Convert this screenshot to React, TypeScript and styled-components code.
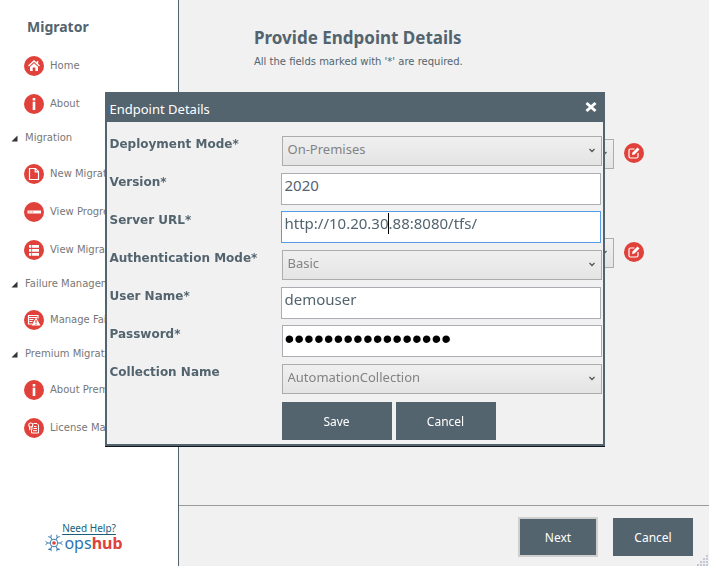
import React from "react";
import styled, { createGlobalStyle, css } from "styled-components";

const slate = "#53646f";
const red = "#e0413a";
const ui = `"Noto Sans", "Open Sans", sans-serif`;
const wide = `"DejaVu Sans", Verdana, sans-serif`;

const GlobalStyle = createGlobalStyle`
  * { box-sizing: border-box; }
  body { margin: 0; background: #f1f1f1; color: ${slate}; font-family: ${ui}; }
  button, input, select { font-family: inherit; margin: 0; }
`;

const Shell = styled.div`
  display: flex;
  min-height: 100vh;
`;

const Sidebar = styled.aside`
  display: flex;
  flex-direction: column;
  flex: 0 0 179px;
  background: #fff;
  border-right: 1px solid ${slate};
  overflow: hidden;
`;

const Brand = styled.h1`
  margin: 0;
  padding: 16px 0 0 27px;
  height: 47px;
  font: bold 14px/22px ${ui};
`;

const NavGroup = styled.section`
  display: flex;
  flex-direction: column;
`;

const NavHeading = styled.h2`
  display: flex;
  align-items: center;
  gap: 7px;
  height: 32px;
  margin: 0;
  padding: 0 0 2px 11px;
  font: normal 10px/14px ${wide};
  color: #777;
  white-space: nowrap;
`;

const NavLink = styled.a`
  display: flex;
  align-items: center;
  gap: 6px;
  height: 38px;
  padding-left: 24px;
  font: 10px/14px ${wide};
  color: #777;
  text-decoration: none;
  white-space: nowrap;
`;

const Help = styled.footer`
  display: flex;
  flex-direction: column;
  align-items: center;
  margin-top: auto;
  padding: 0 10px 14px 0;
`;

const HelpLink = styled.a`
  margin-left: 10px;
  font: 10px/12px ${ui};
  color: #17607a;
  text-underline-offset: 2px;
`;

const Logo = styled.div`
  display: flex;
  align-items: center;
  gap: 1px;
  font: 16px/18px ${ui};
  color: #2b74b0;
  b { color: ${red}; }
`;

const Main = styled.main`
  display: flex;
  flex-direction: column;
  flex: 1;
  min-width: 0;
`;

const Content = styled.div`
  flex: 1;
  padding: 26px 65px 0 75px;
`;

const Title = styled.h2`
  margin: 0;
  font: bold 17px/24px ${ui};
`;

const Hint = styled.p`
  margin: 5px 0 0;
  font: 10px/14px ${wide};
`;

const Endpoints = styled.div`
  display: grid;
  gap: 67px;
  margin-top: 68px;
`;

const EndpointRow = styled.div`
  display: flex;
  align-items: center;
  gap: 10px;
`;

const IconButton = styled.button`
  display: flex;
  padding: 0;
  border: 0;
  background: none;
`;

const Actions = styled.footer`
  display: flex;
  justify-content: flex-end;
  align-items: center;
  gap: 15px;
  height: 61px;
  padding: 2px 16px 0 0;
  border-top: 1px solid #999c9c;
  position: relative;
`;

const Button = styled.button<{ $width?: number; $ring?: boolean }>`
  width: ${(p) => p.$width ?? 80}px;
  height: ${(p) => (p.$ring ? 40 : 38)}px;
  padding: 2px 0 0;
  border: ${(p) => (p.$ring ? "2px solid #cfcfcf" : "0")};
  background: ${slate};
  color: #fff;
  font: 12px/16px ${ui};
`;

const Grip = styled.svg`
  position: absolute;
  right: 0;
  bottom: 0;
`;

const Overlay = styled.div`
  position: fixed;
  inset: 0;
  display: flex;
  justify-content: center;
  align-items: flex-start;
  padding-top: 92px;
`;

const Dialog = styled.div`
  width: min(500px, 100%);
  border: 2px solid ${slate};
  border-top: 0;
  background: #f1f1f1;
  box-shadow: 0 1px 0 #111820;
`;

const DialogHeader = styled.header`
  display: flex;
  align-items: center;
  justify-content: space-between;
  height: 30px;
  padding: 4px 6px 0 3px;
  background: ${slate};
  color: #fff;
`;

const DialogTitle = styled.h2`
  margin: 0;
  font: 13px/20px ${ui};
`;

const CloseButton = styled(IconButton)`
  padding-bottom: 4px;
`;

const Form = styled.form`
  padding: 12px 1px 4px 3px;
`;

const Row = styled.div`
  display: grid;
  grid-template-columns: 171px 1fr;
  align-items: start;
  min-height: 38px;
`;

const Label = styled.label`
  font: bold 12px/20px ${wide};
`;

const field = css`
  width: 100%;
  border: 1px solid #abadb3;
  border-radius: 0;
  outline: none;
`;

const InputWrap = styled.div<{ $secret?: boolean }>`
  position: relative;
  margin: ${(p) => (p.$secret ? "1px 0 0 1px" : "1px 1px 0 0")};
`;

const Input = styled.input<{ $active?: boolean }>`
  ${field}
  display: block;
  height: 32px;
  padding: 0 3px 9px;
  background: #fff;
  color: ${slate};
  font-size: 15px;
  ${(p) => p.$active && "border-color: #569de5;"}
  &[type="password"] {
    padding: 0 2px 4px;
    color: #000;
    font-family: "Liberation Sans", Arial, sans-serif;
    font-size: 28px;
  }
`;

const Caret = styled.span`
  position: absolute;
  left: 107px;
  top: 2px;
  width: 1px;
  height: 21px;
  background: #000;
`;

const SelectWrap = styled.div`
  position: relative;
  flex: 1;
  margin: 2px 0 0 1px;
  svg { position: absolute; right: 7px; top: 12px; pointer-events: none; }
`;

const Select = styled.select`
  ${field}
  display: block;
  appearance: none;
  height: 30px;
  padding: 0 20px 4px 5px;
  border-color: #acacac;
  background: linear-gradient(#f0f0f0, #e4e4e4);
  color: #838383;
  font-size: 13px;
`;

const DialogActions = styled.div`
  display: flex;
  gap: 4px;
  margin: 2px 0 0 172px;
`;

type IconName = "home" | "info" | "file" | "progress" | "list" | "failure" | "license" | "edit";

const glyphs: Record<IconName, React.ReactNode> = {
  home: (
    <>
      <path d="M4.5 10 10 5l5.500 5M13.500 5v3" fill="none" stroke="#fff" strokeWidth="1.4" />
      <path d="M6 10.800 10 7.300l4 3.500V15h-2.700v-3.500H8.700V15H6z" fill="#fff" />
    </>
  ),
  info: <path d="M8.700 4h2.600v2.400H8.700zM8.700 7.700h2.600V16H8.700z" fill="#fff" />,
  file: <path d="M5.500 4.500h6l3 3v8h-9zM11.200 4.500v3.300h3.300" fill="none" stroke="#fff" strokeWidth="1.2" />,
  progress: (
    <>
      <path d="M3.500 8.500h13.500v3H3.500z" fill="#fff" />
      <path d="M4.500 9.500h2v1h-2zM7.500 9.500h2v1h-2z" fill="#e88a85" />
    </>
  ),
  list: (
    <>
      <path d="M5 5h10v2.800H5zM5 9h10v2.800H5zM5 13h10v2.800H5z" fill="#fff" />
      <path d="M7.600 5v11" stroke={red} strokeWidth=".7" />
    </>
  ),
  failure: (
    <>
      <path d="M4 5.500h10v3M4 7.500h9M4.500 5.500v8.500h3.500M5.500 9.500h4M5.500 11.500h3" fill="none" stroke="#fff" strokeWidth="1.2" />
      <path d="m12 7.500 4.500 8H7.500z" fill="#fff" />
      <path d="M12 10v3m0 .8v1" stroke={red} strokeWidth="1.1" />
    </>
  ),
  license: (
    <>
      <path d="M9.500 5.500h3.500l1.500 1.500v8h-7v-3.500M10 8.500h2.500M9.500 10.500h3.500M9 12.700h4" fill="none" stroke="#fff" strokeWidth="1" />
      <circle cx="6.800" cy="7" r="2" fill="none" stroke="#fff" strokeWidth="1.1" />
      <path d="M5.500 8.800v3l1.300-1 1.200 1v-3" fill="none" stroke="#fff" strokeWidth=".9" />
    </>
  ),
  edit: (
    <>
      <path d="M10.500 6h-4Q5 6 5 7.500v6Q5 15 6.500 15h6q1.500 0 1.500-1.500V10" fill="none" stroke="#fff" strokeWidth="1.2" />
      <path d="m8 12 .5-2.500 5-5 2 2-5 5z" fill="#fff" />
    </>
  ),
};

const RoundIcon = ({ name }: { name: IconName }) => (
  <svg width="20" height="20" viewBox="0 0 20 20" aria-hidden="true">
    <circle cx="10" cy="10" r="10" fill={red} />
    {glyphs[name]}
  </svg>
);

const Triangle = () => (
  <svg width="7" height="7" viewBox="0 0 7 7" aria-hidden="true">
    <path d="M6.500.5v6h-6z" fill="#333" />
  </svg>
);

const Chevron = () => (
  <svg width="6" height="5" viewBox="0 0 6 5" aria-hidden="true">
    <path d="M.5 1 3 3.500 5.500 1" fill="none" stroke="#555" strokeWidth="1.3" />
  </svg>
);

const LogoMark = () => (
  <svg width="18" height="18" viewBox="0 0 18 18" aria-hidden="true">
    <g fill="none" stroke="#3a7cb0" strokeWidth="1">
      <circle cx="9" cy="9" r="3.800" />
      {[0, 60, 120, 180, 240, 300].map((angle) => (
        <path key={angle} d="M12.800 9h2.400M17.500 7.300 15.200 9l2.300 1.700" transform={`rotate(${angle} 9 9)`} />
      ))}
    </g>
    <circle cx="9" cy="9" r="1.800" fill={red} />
  </svg>
);

const NavItem = ({ icon, children }: { icon: IconName; children: string }) => (
  <NavLink href="#">
    <RoundIcon name={icon} />
    {children}
  </NavLink>
);

const SelectRow = ({ id, label, value }: { id: string; label: string; value: string }) => (
  <Row>
    <Label htmlFor={id}>{label}</Label>
    <SelectWrap>
      <Select id={id} defaultValue={value}>
        <option>{value}</option>
      </Select>
      <Chevron />
    </SelectWrap>
  </Row>
);

type InputRowProps = { id: string; label: string; value: string; type?: string; active?: boolean };

const InputRow = ({ id, label, value, type = "text", active }: InputRowProps) => (
  <Row>
    <Label htmlFor={id}>{label}</Label>
    <InputWrap $secret={type === "password"}>
      <Input id={id} type={type} defaultValue={value} $active={active} />
      {active && <Caret />}
    </InputWrap>
  </Row>
);

const Endpoint = ({ label }: { label: string }) => (
  <EndpointRow>
    <SelectWrap>
      <Select aria-label={label} />
      <Chevron />
    </SelectWrap>
    <IconButton type="button" aria-label={`Edit ${label}`}>
      <RoundIcon name="edit" />
    </IconButton>
  </EndpointRow>
);

export default function App() {
  return (
    <>
      <GlobalStyle />
      <Shell>
        <Sidebar>
          <Brand>Migrator</Brand>
          <nav>
            <NavGroup>
              <NavItem icon="home">Home</NavItem>
              <NavItem icon="info">About</NavItem>
            </NavGroup>
            <NavGroup>
              <NavHeading><Triangle />Migration</NavHeading>
              <NavItem icon="file">New Migration</NavItem>
              <NavItem icon="progress">View Progress</NavItem>
              <NavItem icon="list">View Migrations</NavItem>
            </NavGroup>
            <NavGroup>
              <NavHeading><Triangle />Failure Management</NavHeading>
              <NavItem icon="failure">Manage Failures</NavItem>
            </NavGroup>
            <NavGroup>
              <NavHeading><Triangle />Premium Migration</NavHeading>
              <NavItem icon="info">About Premium</NavItem>
              <NavItem icon="license">License Management</NavItem>
            </NavGroup>
          </nav>
          <Help>
            <HelpLink href="#">Need Help?</HelpLink>
            <Logo><LogoMark /><span>ops<b>hub</b></span></Logo>
          </Help>
        </Sidebar>
        <Main>
          <Content>
            <Title>Provide Endpoint Details</Title>
            <Hint>All the fields marked with '*' are required.</Hint>
            <Endpoints>
              <Endpoint label="Source endpoint" />
              <Endpoint label="Target endpoint" />
            </Endpoints>
          </Content>
          <Actions>
            <Button type="button" $ring>Next</Button>
            <Button type="button">Cancel</Button>
            <Grip width="12" height="12" viewBox="0 0 12 12" aria-hidden="true">
              <path
                d="M9 1h2v2H9zM6 4h2v2H6zM9 4h2v2H9zM3 7h2v2H3zM6 7h2v2H6zM9 7h2v2H9zM0 10h2v2H0zM3 10h2v2H3zM6 10h2v2H6zM9 10h2v2H9z"
                fill="#c3c8d4"
              />
            </Grip>
          </Actions>
        </Main>
      </Shell>
      <Overlay>
        <Dialog role="dialog" aria-labelledby="dialog-title">
          <DialogHeader>
            <DialogTitle id="dialog-title">Endpoint Details</DialogTitle>
            <CloseButton type="button" aria-label="Close">
              <svg width="12" height="12" viewBox="0 0 12 12" aria-hidden="true">
                <path d="m1.500 2 9 8m0-8-9 8" stroke="#fff" strokeWidth="3" />
              </svg>
            </CloseButton>
          </DialogHeader>
          <Form>
            <SelectRow id="deployment" label="Deployment Mode*" value="On-Premises" />
            <InputRow id="version" label="Version*" value="2020" />
            <InputRow id="server" label="Server URL*" value="http://10.20.30.88:8080/tfs/" active />
            <SelectRow id="auth" label="Authentication Mode*" value="Basic" />
            <InputRow id="user" label="User Name*" value="demouser" />
            <InputRow id="password" label="Password*" type="password" value="12345678901234567" />
            <SelectRow id="collection" label="Collection Name" value="AutomationCollection" />
            <DialogActions>
              <Button type="button" $width={110}>Save</Button>
              <Button type="button" $width={100}>Cancel</Button>
            </DialogActions>
          </Form>
        </Dialog>
      </Overlay>
    </>
  );
}
